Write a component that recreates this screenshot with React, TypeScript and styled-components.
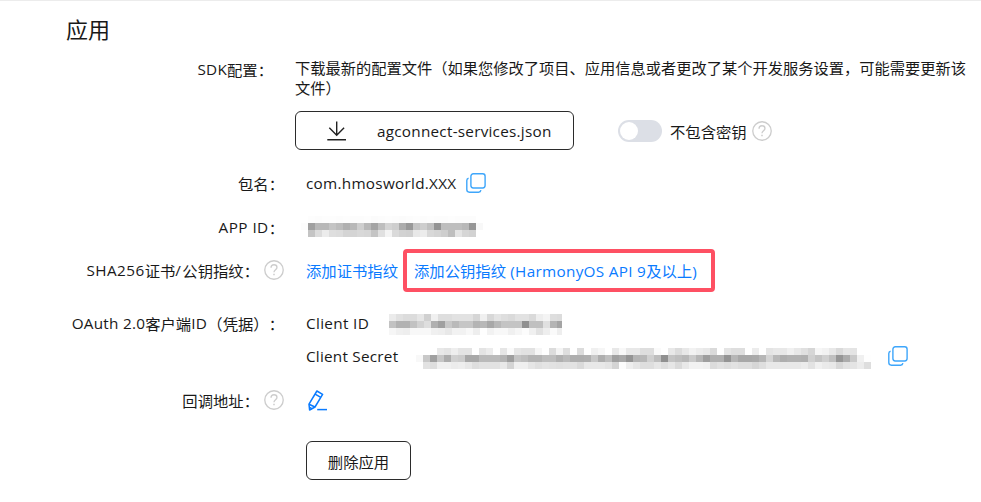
import React from 'react';
import styled, { createGlobalStyle } from 'styled-components';

const GlobalStyle = createGlobalStyle`
  * { box-sizing: border-box; }
  body {
    margin: 0;
    background: #fff;
    color: #191919;
    font-family: "Open Sans", "Noto Sans CJK SC", sans-serif;
    font-size: 15.33px;
    text-spacing-trim: space-all;
  }
`;

const Page = styled.main`
  display: flex;
  flex-direction: column;
  width: 981px;
  height: 502px;
  overflow: hidden;
  border-top: 1px solid #ececec;
`;

const Title = styled.h1`
  margin: 11px 0 0 66px;
  height: 32px;
  font: 400 22px/32px "Noto Sans CJK SC", sans-serif;
`;

const Row = styled.section<{ $h: number; $top?: number }>`
  display: grid;
  grid-template-columns: 285px 1fr;
  height: ${(p) => p.$h}px;
  margin-top: ${(p) => p.$top ?? 0}px;
`;

const Label = styled.div<{ $inset?: number }>`
  display: flex;
  align-items: center;
  justify-content: flex-end;
  height: 24px;
  padding-right: ${(p) => p.$inset ?? 1}px;
  white-space: nowrap;
`;

const Value = styled.div<{ $pad?: number; $h?: number }>`
  display: flex;
  align-items: center;
  height: ${(p) => p.$h ?? 24}px;
  padding-left: ${(p) => p.$pad ?? 21}px;
  white-space: nowrap;
`;

const Stack = styled.div`
  display: flex;
  flex-direction: column;
  padding-left: 10px;
`;

const Zh = styled.span`
  font-family: "Noto Sans CJK SC", sans-serif;
  line-height: 24px;
  white-space: pre;
`;

const En = styled.span<{ $ls?: number }>`
  font-family: "Open Sans", sans-serif;
  font-size: 15.3px;
  line-height: 24px;
  letter-spacing: ${(p) => p.$ls ?? 0}px;
  white-space: pre;
`;

const Description = styled.p`
  margin: 0;
  font-family: "Noto Sans CJK SC", sans-serif;
  font-size: 15.26px;
  line-height: 20px;
  white-space: nowrap;
`;

const Actions = styled.div`
  display: flex;
  align-items: center;
  margin-top: 14px;
`;

const OutlineButton = styled.button<{ $w: number }>`
  display: flex;
  align-items: center;
  justify-content: center;
  width: ${(p) => p.$w}px;
  height: 39px;
  padding: 0;
  border: 1px solid #2b2b2b;
  border-radius: 6px;
  background: #fff;
  color: inherit;
  font: inherit;
`;

const DownloadButton = styled(OutlineButton)`
  justify-content: flex-start;
  gap: 30px;
  padding-left: 31px;
`;

const Toggle = styled.span`
  display: flex;
  width: 44px;
  height: 22px;
  margin: 0 8px 0 44px;
  padding: 2px;
  border-radius: 11px;
  background: #dcdfe6;
  &::before {
    content: "";
    width: 18px;
    height: 18px;
    border-radius: 50%;
    background: #fff;
  }
`;

const IconSlot = styled.span<{ $gap: number }>`
  display: flex;
  margin-left: ${(p) => p.$gap}px;
`;

const Link = styled.a`
  color: #0a7bff;
`;

const Highlight = styled.span`
  display: flex;
  align-items: center;
  width: 312px;
  height: 43px;
  margin-left: 5px;
  padding-left: 7px;
  border: 4px solid #fe5063;
  border-radius: 4px;
`;

const Mosaic = styled.div<{ $w: number; $cols: number; $gap: number; $top: number }>`
  display: grid;
  grid-template-columns: repeat(${(p) => p.$cols}, 7px);
  grid-auto-rows: 7px;
  align-self: flex-start;
  width: ${(p) => p.$w}px;
  height: 21px;
  margin: ${(p) => p.$top}px 0 0 ${(p) => p.$gap}px;
  overflow: hidden;
`;

const ClientLabel = styled.div<{ $w: number }>`
  display: flex;
  width: ${(p) => p.$w}px;
`;

const APP_ID = [
  [255, 253, 252, 253, 253, 252, 253, 252, 252, 253, 251, 252, 253, 252, 251, 252, 253, 252, 253, 252, 252, 253, 252, 252, 252, 255],
  [252, 160, 184, 184, 196, 188, 176, 184, 206, 184, 164, 190, 212, 206, 172, 152, 196, 206, 192, 148, 190, 190, 190, 184, 150, 248],
  [255, 196, 220, 236, 222, 220, 212, 212, 216, 214, 196, 224, 244, 218, 210, 208, 232, 236, 216, 212, 206, 190, 228, 214, 210, 255],
];

const CLIENT_ID = [
  [235, 225, 220, 220, 230, 208, 240, 222, 222, 226, 226, 226, 214, 240, 216, 228, 222, 218, 226, 226, 218, 238, 244, 222, 220],
  [194, 178, 178, 194, 210, 222, 176, 160, 200, 186, 198, 198, 180, 184, 168, 184, 196, 196, 196, 144, 192, 192, 224, 180, 164],
  [246, 240, 238, 248, 248, 248, 240, 238, 232, 242, 242, 248, 238, 254, 242, 248, 248, 240, 246, 252, 240, 226, 238, 250, 238],
];

const CLIENT_SECRET = [
  [255, 255, 255, 232, 228, 238, 228, 228, 255, 228, 236, 255, 230, 250, 230, 226, 226, 246, 255, 220, 244, 222, 255, 220, 255, 240, 246, 255, 232, 248, 232, 232, 222, 222, 250, 255, 232, 220, 232, 242, 236, 232, 218, 255, 228, 222, 222, 255, 236, 255, 228, 232, 232, 240, 232, 224, 214, 246, 242, 232, 218, 230, 228, 255, 255],
  [248, 200, 160, 198, 172, 208, 204, 168, 168, 186, 186, 186, 180, 158, 196, 190, 180, 180, 190, 190, 176, 186, 174, 174, 176, 200, 174, 190, 160, 168, 148, 180, 184, 208, 190, 144, 196, 190, 184, 202, 182, 158, 176, 176, 148, 182, 168, 168, 170, 182, 212, 184, 174, 178, 178, 176, 208, 196, 208, 192, 150, 172, 202, 240, 254],
  [255, 226, 222, 240, 240, 236, 238, 232, 222, 226, 226, 226, 232, 212, 240, 240, 230, 224, 228, 226, 224, 226, 226, 218, 232, 232, 232, 228, 212, 252, 238, 230, 222, 222, 230, 222, 230, 218, 232, 242, 242, 240, 220, 226, 222, 226, 222, 222, 214, 222, 232, 232, 232, 232, 232, 236, 226, 240, 234, 232, 216, 226, 228, 236, 222],
];

function Redacted({ rows, width, gap, top }: { rows: number[][]; width: number; gap: number; top: number }) {
  return (
    <Mosaic $w={width} $cols={rows[0].length} $gap={gap} $top={top}>
      {rows.flat().map((v, i) => (
        <i key={i} style={{ background: `rgb(${v},${v},${v})` }} />
      ))}
    </Mosaic>
  );
}

const CopyIcon = () => (
  <svg width="20" height="20" viewBox="0 0 20 20" fill="none" stroke="#3ea6fb" strokeWidth="1.4">
    <rect x="4.9" y="0.8" width="14.2" height="14.2" rx="2.4" />
    <path d="M2.6 5.2c-1.2.2-1.8 1-1.8 2.2v9.2c0 1.6 1 2.6 2.6 2.6h9.2c1.3 0 2.1-.7 2.3-2" />
  </svg>
);

const HelpIcon = () => (
  <svg width="20" height="20" viewBox="0 0 21 21" fill="none" stroke="#cdcdcd" strokeWidth="1.4">
    <circle cx="10.5" cy="10.5" r="9.7" />
    <path d="M7.4 8.2c0-2 1.3-3.2 3.1-3.2s3.1 1.1 3.1 2.8c0 2.3-3.1 2.5-3.1 5" />
    <path d="M10.5 14.4v1.6" strokeWidth="1.6" />
  </svg>
);

const EditIcon = () => (
  <svg width="20" height="21" viewBox="0 0 20 21" fill="none" stroke="#0a7bff" strokeWidth="1.5" strokeLinejoin="round">
    <path d="M8.9 1 14.6 4.3 7 17 1.6 20 1 14.2Z" />
    <path d="M7.1 4.1 12.8 7.4M1 14.2 7 17M1.3 17.2 4.1 18.8" />
    <path d="M9.2 19.6H19" />
  </svg>
);

const DownloadIcon = () => (
  <svg width="20" height="20" viewBox="0 0 20 20" fill="none" stroke="#222" strokeWidth="1.4">
    <path d="M9.7 0.5V14M2.3 6.8 9.7 14.2 17.1 6.8M0.3 18.7H19" />
  </svg>
);

export default function App() {
  return (
    <>
      <GlobalStyle />
      <Page>
        <Title>应用</Title>
        <Row $h={114} $top={13}>
          <Label $inset={12}>
            <En $ls={0.2}>SDK</En>
            <Zh>配置：</Zh>
          </Label>
          <Stack>
            <Description>
              下载最新的配置文件（如果您修改了项目、应用信息或者更改了某个开发服务设置，可能需要更新该
              <br />
              文件）
            </Description>
            <Actions>
              <DownloadButton $w={279}>
                <DownloadIcon />
                <En $ls={0.24}>agconnect-services.json</En>
              </DownloadButton>
              <Toggle />
              <Zh>不包含密钥</Zh>
              <IconSlot $gap={5}><HelpIcon /></IconSlot>
            </Actions>
          </Stack>
        </Row>
        <Row $h={44}>
          <Label><Zh>包名：</Zh></Label>
          <Value>
            <En $ls={0.27}>com.hmosworld.XXX</En>
            <IconSlot $gap={9.6}><CopyIcon /></IconSlot>
          </Value>
        </Row>
        <Row $h={43}>
          <Label><En $ls={0.45}>APP ID</En><Zh>：</Zh></Label>
          <Value $pad={0}><Redacted rows={APP_ID} width={182} gap={16} top={1} /></Value>
        </Row>
        <Row $h={53}>
          <Label>
            <En $ls={0.45}>SHA256</En><Zh>证书</Zh><En $ls={1.4}>/</En><Zh>公钥指纹：</Zh>
            <IconSlot $gap={5}><HelpIcon /></IconSlot>
          </Label>
          <Value>
            <Link><Zh>添加证书指纹</Zh></Link>
            <Highlight>
              <Link><Zh>添加公钥指纹</Zh><En $ls={0.3}> (HarmonyOS API 9</En><Zh>及以上</Zh><En>)</En></Link>
            </Highlight>
          </Value>
        </Row>
        <Row $h={33}>
          <Label><En $ls={0.25}>OAuth 2.0</En><Zh>客户端</Zh><En $ls={0.4}>ID</En><Zh>（凭据）：</Zh></Label>
          <Value>
            <ClientLabel $w={63}><En $ls={0.33}>Client ID</En></ClientLabel>
            <Redacted rows={CLIENT_ID} width={173} gap={20} top={3} />
          </Value>
        </Row>
        <Row $h={44}>
          <span />
          <Value>
            <ClientLabel $w={93}><En $ls={0.23}>Client Secret</En></ClientLabel>
            <Redacted rows={CLIENT_SECRET} width={455} gap={17} top={4} />
            <IconSlot $gap={17}><CopyIcon /></IconSlot>
          </Value>
        </Row>
        <Row $h={53}>
          <Label>
            <Zh>回调地址：</Zh>
            <IconSlot $gap={5}><HelpIcon /></IconSlot>
          </Label>
          <Value $pad={23}><EditIcon /></Value>
        </Row>
        <Row $h={39}>
          <span />
          <Value $h={39}><OutlineButton $w={105}><Zh>删除应用</Zh></OutlineButton></Value>
        </Row>
      </Page>
    </>
  );
}
